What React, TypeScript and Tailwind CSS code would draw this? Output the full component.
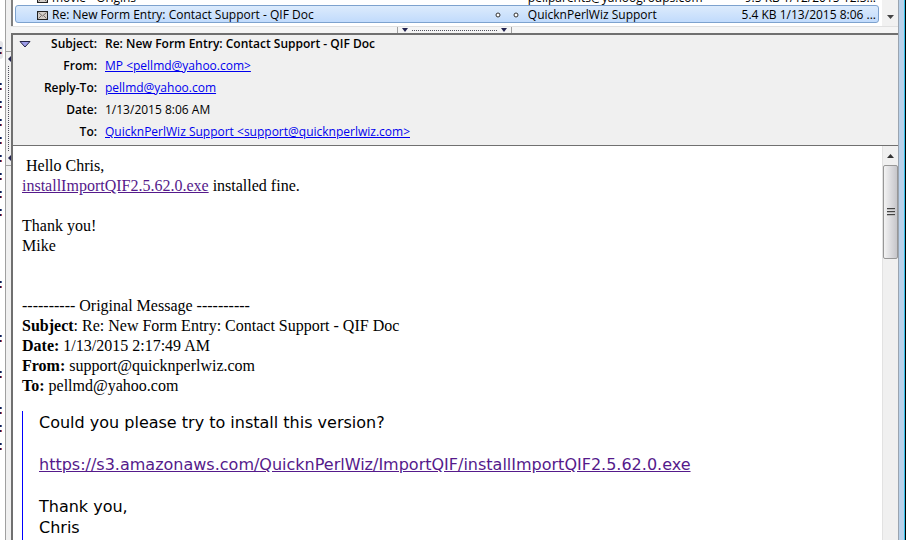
import React from "react";

const folderRows = [
  true, false, true, true, true, true, true, true, true, true, false, false,
  false, true, false, false, true, false, true, false, true, true, true,
];

function FolderStrip() {
  return (
    <aside className="h-full w-[5px] shrink-0 overflow-hidden bg-white pt-[41px]">
      {folderRows.map((marked, i) => (
        <div
          key={i}
          className={
            i === 0
              ? "flex h-[18px] w-[3px] items-center rounded-r-sm bg-[#e4e4e8]"
              : "flex h-[18px] items-center"
          }
        >
          {marked && (
            <svg width="2" height="7" viewBox="0 0 2 7" aria-hidden="true">
              <path d="M0 0h1v2H0zM0 5h1v2H0z" fill="#15154a" />
              <path d="M1 0h1v2H1z" fill="#4a6b9c" />
              <path d="M1 5h1v2H1z" fill="#b04a62" />
            </svg>
          )}
        </div>
      ))}
    </aside>
  );
}

function LeftArrow() {
  return (
    <svg width="4" height="6" viewBox="0 0 4 6" aria-hidden="true">
      <path d="M4 0v6L1 3z" fill="#22224e" />
    </svg>
  );
}

function VerticalSplitter() {
  return (
    <div className="flex h-full w-[6px] shrink-0 flex-col items-center border-l border-[#a0a0a0] bg-[#f0f0f0] pt-[51px]">
      <div className="flex h-[115px] w-full flex-col items-center border-y border-[#a0a0a0] py-1">
        <LeftArrow />
        <div className="my-1 w-0 grow border-l border-dotted border-[#50505c]" />
        <LeftArrow />
      </div>
    </div>
  );
}

function Envelope() {
  return (
    <svg className="shrink-0" width="11" height="9" viewBox="0 0 11 9" aria-hidden="true">
      <rect x="0.5" y="0.5" width="10" height="8" fill="#d2cdc8" stroke="#222" />
      <path d="M1.5 1.5l4 3.5 4-3.5M1.5 7.5l3-3M9.5 7.5l-3-3" fill="none" stroke="#77706c" />
    </svg>
  );
}

function Ring() {
  return (
    <svg width="6" height="6" viewBox="0 0 6 6" aria-hidden="true">
      <circle cx="3" cy="3" r="2" fill="#fff" stroke="#333" />
    </svg>
  );
}

type Mail = { subject: string; from: string; info: string; selected?: boolean };

const mails: Mail[] = [
  { subject: "movie - Origins", from: "pellparents@yahoogroups.com", info: "9.5 KB 1/12/2015 12:3..." },
  {
    subject: "Re: New Form Entry: Contact Support - QIF Doc",
    from: "QuicknPerlWiz Support",
    info: "5.4 KB 1/13/2015 8:06 ...",
    selected: true,
  },
];

function MailRow({ subject, from, info, selected }: Mail) {
  return (
    <div
      className={
        "flex h-[18px] shrink-0 items-center rounded-[3px] border pl-[21px] pr-[2px] pt-[2px] " +
        (selected
          ? "border-[#7da2ce] bg-linear-to-b from-[#dcebfc] to-[#c1dbfc]"
          : "-mb-px border-transparent")
      }
    >
      <Envelope />
      <div className="flex min-w-0 flex-1 items-center justify-between pl-1 pr-[9px]">
        <span className="whitespace-nowrap">{subject}</span>
        {selected && (
          <span className="flex gap-3">
            <Ring />
            <Ring />
          </span>
        )}
      </div>
      <span className="flex w-[41.5%] shrink-0 justify-between whitespace-nowrap">
        <span>{from}</span>
        <span>{info}</span>
      </span>
    </div>
  );
}

function MailList() {
  return (
    <section className="flex h-[26px] shrink-0 border-l-2 border-[#808080] bg-white">
      <div className="flex min-w-0 flex-1 flex-col justify-end overflow-hidden pb-[3px] pl-[2px] pr-[3px] text-[12px] leading-4">
        {mails.map((m) => (
          <MailRow key={m.subject} {...m} />
        ))}
      </div>
      <div className="flex w-4 flex-col items-center justify-end bg-[#f1f1f1] pb-[7px]">
        <svg width="7" height="4" viewBox="0 0 7 4" aria-hidden="true">
          <path d="M0 0h7L3.500 4z" fill="#444" />
        </svg>
      </div>
    </section>
  );
}

function DownArrow() {
  return (
    <svg width="6" height="4" viewBox="0 0 6 4" aria-hidden="true">
      <path d="M0 0h6L3 4z" fill="#22224e" />
    </svg>
  );
}

function HorizontalSplitter() {
  return (
    <div className="flex h-[7px] shrink-0 justify-center border-t border-[#e0e0e0] bg-[#f5f5f5]">
      <div className="flex w-[115px] items-center border-x border-[#a0a0a0] px-1">
        <DownArrow />
        <div className="mx-1 h-0 grow border-t border-dotted border-[#50505c]" />
        <DownArrow />
      </div>
    </div>
  );
}

const fields = [
  { label: "From:", value: "MP <pellmd@yahoo.com>", href: "mailto:pellmd@yahoo.com" },
  { label: "Reply-To:", value: "pellmd@yahoo.com", href: "mailto:pellmd@yahoo.com" },
  { label: "Date:", value: "1/13/2015 8:06 AM" },
  {
    label: "To:",
    value: "QuicknPerlWiz Support <support@quicknperlwiz.com>",
    href: "mailto:support@quicknperlwiz.com",
  },
];

function MessageHeader() {
  return (
    <header className="flex h-[113px] shrink-0 border-b border-l-2 border-t-2 border-[#707070] bg-[#f0f0f0] pl-[6px]">
      <button type="button" aria-label="Collapse header" className="flex h-[18px] w-3 items-center">
        <svg width="12" height="7" viewBox="0 0 12 7">
          <path d="M1 0.500h10L6 6z" fill="#9c9ce8" stroke="#222244" />
        </svg>
      </button>
      <dl className="grid flex-1 auto-rows-[22px] grid-cols-[66px_1fr] content-start gap-x-2 pt-px text-[12px] leading-4">
        <dt className="text-right font-semibold">Subject:</dt>
        <dd className="font-semibold">Re: New Form Entry: Contact Support - QIF Doc</dd>
        {fields.map((f) => (
          <React.Fragment key={f.label}>
            <dt className="text-right font-semibold">{f.label}</dt>
            <dd>
              {f.href ? (
                <a href={f.href} className="text-[#0000ee] underline">
                  {f.value}
                </a>
              ) : (
                f.value
              )}
            </dd>
          </React.Fragment>
        ))}
      </dl>
    </header>
  );
}

function BodyScrollbar() {
  return (
    <div className="flex w-4 shrink-0 flex-col border-l border-[#e2e2e2] bg-[#f0f0f0]">
      <div className="flex h-[19px] items-center justify-center">
        <svg width="7" height="4" viewBox="0 0 7 4" aria-hidden="true">
          <path d="M0 4h7L3.500 0z" fill="#333" />
        </svg>
      </div>
      <div className="flex h-[94px] flex-col items-center justify-center gap-px rounded-xs border border-[#979797] bg-linear-to-r from-[#f3f3f3] via-[#dcdcdf] to-[#c6c6ca]">
        <span className="h-[2px] w-2 border-t border-[#444] bg-[#bbb]" />
        <span className="h-[2px] w-2 border-t border-[#444] bg-[#bbb]" />
        <span className="h-[2px] w-2 border-t border-[#444] bg-[#bbb]" />
      </div>
    </div>
  );
}

function MessageBody() {
  return (
    <article className="min-w-0 flex-1 overflow-hidden bg-white pl-[9px] pt-[10px] font-['Liberation_Serif',serif] text-[16px] leading-5">
      <p>
        &nbsp;Hello Chris,
        <br />
        <a href="#install" className="text-[#551a8b] underline">
          installImportQIF2.5.62.0.exe
        </a>{" "}
        installed fine.
      </p>
      <p className="pt-5">
        Thank you!
        <br />
        Mike
      </p>
      <p className="pt-10">
        ---------- Original Message ----------
        <br />
        <b>Subject</b>: Re: New Form Entry: Contact Support - QIF Doc
        <br />
        <b>Date:</b> 1/13/2015 2:17:49 AM
        <br />
        <b>From:</b> support@quicknperlwiz.com
        <br />
        <b>To:</b> pellmd@yahoo.com
      </p>
      <blockquote className="mt-[15px] h-40 border-l border-[#0000ff] pl-4 font-['DejaVu_Sans',sans-serif] leading-[21px]">
        <p className="pt-px">Could you please try to install this version?</p>
        <p className="pt-[21px]">
          <a href="#download" className="text-[#551a8b] underline">
            https://s3.amazonaws.com/QuicknPerlWiz/ImportQIF/installImportQIF2.5.62.0.exe
          </a>
        </p>
        <p className="pt-[21px]">
          Thank you,
          <br />
          Chris
        </p>
      </blockquote>
    </article>
  );
}

export default function App() {
  return (
    <div className="flex h-screen overflow-hidden bg-white font-['Open_Sans',sans-serif] text-black">
      <FolderStrip />
      <VerticalSplitter />
      <main className="flex min-w-0 flex-1 flex-col">
        <MailList />
        <HorizontalSplitter />
        <MessageHeader />
        <div className="flex min-h-0 flex-1 border-l-2 border-[#707070]">
          <MessageBody />
          <BodyScrollbar />
        </div>
      </main>
      <div className="flex w-[9px] shrink-0 border-l border-[#9aa4b0] bg-[#b9d1ea]">
        <div className="ml-auto w-px bg-[#35c0e8]" />
        <div className="w-px bg-black" />
        <div className="w-px bg-white" />
      </div>
    </div>
  );
}
